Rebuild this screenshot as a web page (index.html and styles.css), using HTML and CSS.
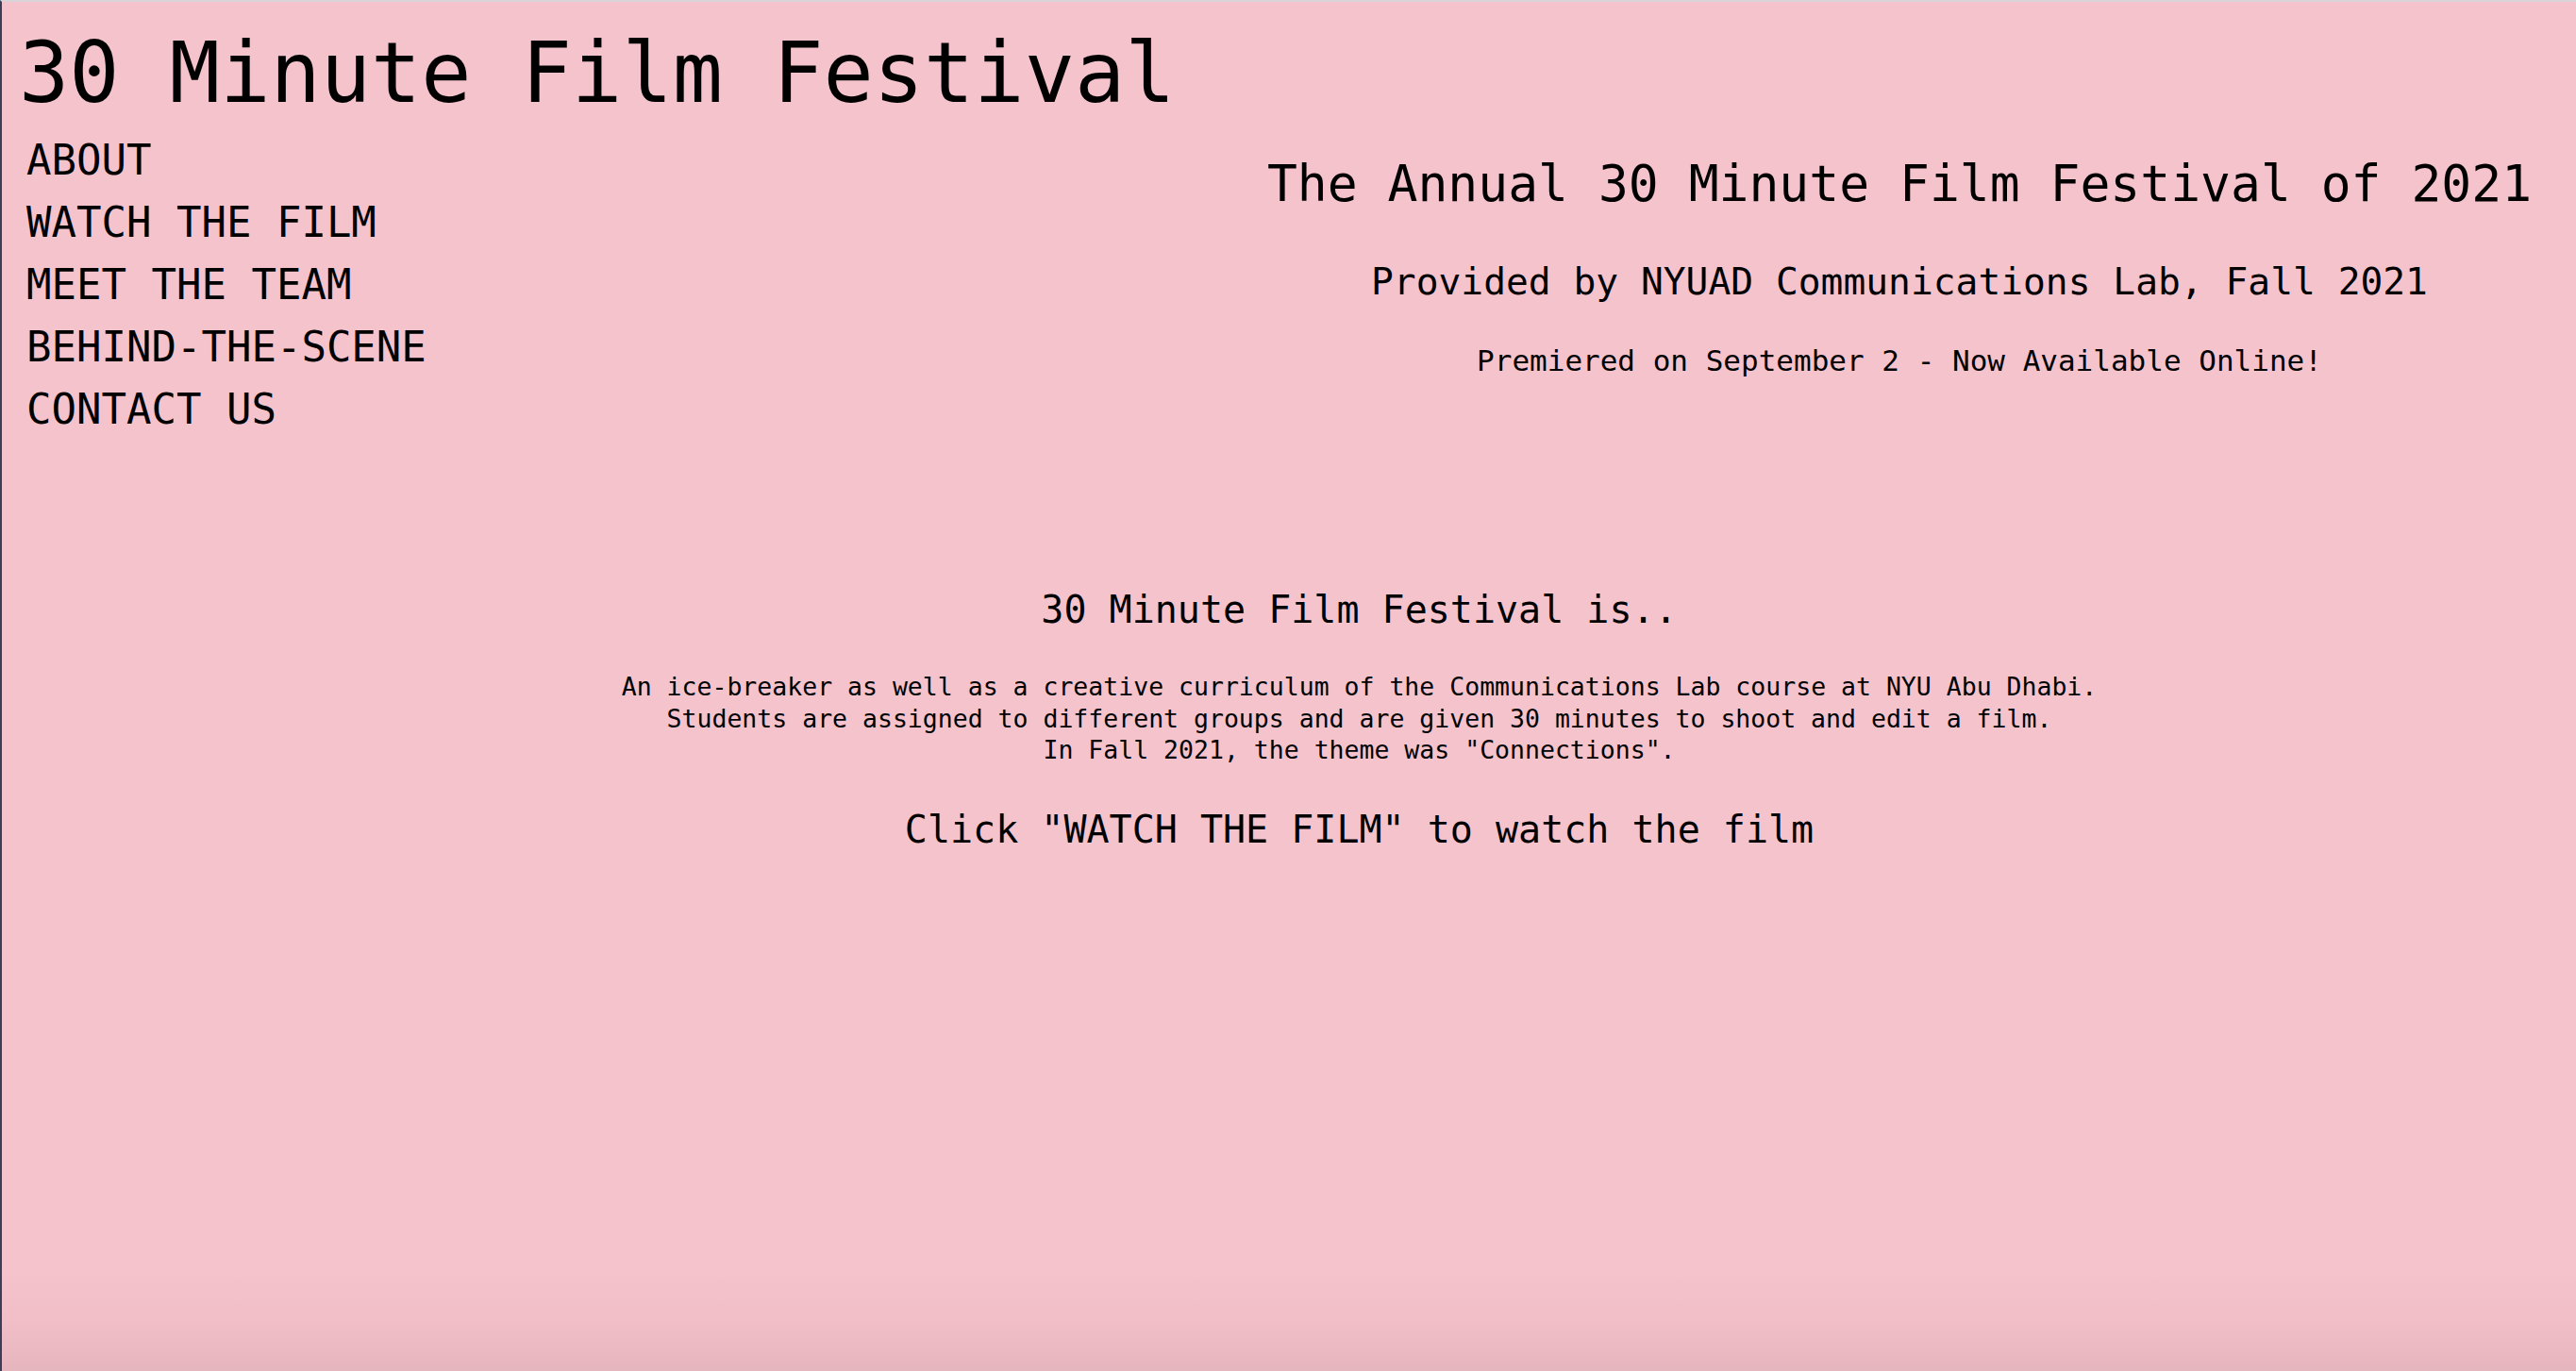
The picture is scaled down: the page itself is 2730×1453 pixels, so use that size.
FILE: index.html
```html
<!DOCTYPE html>
<html lang="en">
<head>
<meta charset="utf-8">
<title>30 Minute Film Festival</title>
<link rel="stylesheet" href="styles.css">
</head>
<body>
<div class="page">
  <h1 class="site-title">30 Minute Film Festival</h1>
  <div class="top-row">
    <nav class="nav">
      <a class="nav-link" href="#">ABOUT</a>
      <a class="nav-link" href="#">WATCH THE FILM</a>
      <a class="nav-link" href="#">MEET THE TEAM</a>
      <a class="nav-link" href="#">BEHIND-THE-SCENE</a>
      <a class="nav-link" href="#">CONTACT US</a>
    </nav>
    <header class="intro">
      <h2 class="intro-title">The Annual 30 Minute Film Festival of 2021</h2>
      <h3 class="intro-sub">Provided by NYUAD Communications Lab, Fall 2021</h3>
      <p class="intro-note">Premiered on September 2 - Now Available Online!</p>
    </header>
  </div>
  <section class="about">
    <h3 class="about-title">30 Minute Film Festival is..</h3>
    <p class="about-text">An ice-breaker as well as a creative curriculum of the Communications Lab course at NYU Abu Dhabi.<br>Students are assigned to different groups and are given 30 minutes to shoot and edit a film.<br>In Fall 2021, the theme was "Connections".</p>
    <h3 class="about-cta">Click "WATCH THE FILM" to watch the film</h3>
  </section>
</div>
</body>
</html>
```
FILE: styles.css
```css
html, body {
  margin: 0;
  padding: 0;
}
body {
  min-height: 100vh;
  box-sizing: border-box;
  border-top: 2px solid #d9d4d8;
  border-left: 2px solid #3b3e56;
  background: linear-gradient(to bottom, #f5c3cc 0, #f5c3cc calc(100% - 110px), #f1bec7 calc(100% - 50px), #e5b5be 100%);
  color: #000;
  font-family: "DejaVu Sans Mono", "Liberation Mono", monospace;
}
.page {
  padding: 26px 7px 0 6px;
}
.site-title {
  margin: 0;
  padding-left: 12px;
  font-size: 88.5px;
  font-weight: normal;
  line-height: 100px;
}
.top-row {
  display: flex;
  margin-top: 9px;
}
.nav {
  flex: 1;
  display: flex;
  flex-direction: column;
  padding-left: 20px;
}
.nav-link {
  color: #000;
  text-decoration: none;
  font-size: 44px;
  line-height: 66px;
  font-weight: 300;
}
.intro {
  width: 1420px;
  text-align: center;
  padding-top: 27px;
}
.intro-title {
  margin: 0;
  font-size: 53px;
  line-height: 62px;
  font-weight: normal;
}
.intro-sub {
  margin: 48px 0 0;
  font-size: 39.6px;
  line-height: 48px;
  font-weight: normal;
}
.intro-note {
  margin: 41px 0 0;
  font-size: 31px;
  line-height: 38px;
}
.about {
  padding-left: 150px;
  text-align: center;
  margin-top: 155px;
}
.about-title {
  margin: 0;
  font-size: 40px;
  line-height: 48px;
  font-weight: normal;
}
.about-text {
  margin: 41px 0 0;
  font-size: 26.5px;
  line-height: 33.5px;
}
.about-cta {
  margin: 43px 0 0;
  font-size: 40px;
  line-height: 48px;
  font-weight: normal;
}
```
